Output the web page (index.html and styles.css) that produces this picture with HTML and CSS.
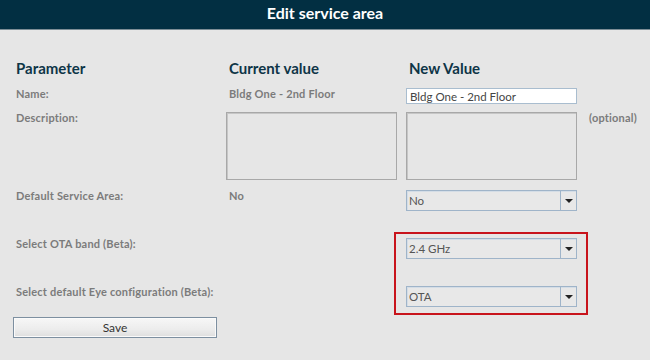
FILE: index.html
```html
<!DOCTYPE html>
<html>
  <head>
    <title>Edit service area</title>
    <meta name="viewport" content="width=device-width, initial-scale=1.0" />
    <link rel="stylesheet" href="styles.css">
  </head>
  <body>
    <div class="title-bar">Edit service area</div>

    <form class="area-form" onsubmit="return false">
      <!-- Column headers -->
      <div class="col-head">Parameter</div>
      <div class="col-head indent">Current value</div>
      <div class="col-head indent">New Value</div>
      <div></div>

      <!-- Name -->
      <label class="param" for="nameInput">Name:</label>
      <div class="current">Bldg One - 2nd Floor</div>
      <div><input type="text" id="nameInput" class="text-input" value="Bldg One - 2nd Floor" /></div>
      <div></div>

      <!-- Description -->
      <label class="param" for="descInput">Description:</label>
      <div><textarea class="text-area" readonly></textarea></div>
      <div><textarea id="descInput" class="text-area"></textarea></div>
      <div class="hint">(optional)</div>

      <!-- Default service area -->
      <label class="param" for="defaultSelect">Default Service Area:</label>
      <div class="current">No</div>
      <div class="select-wrap">
        <select id="defaultSelect">
          <option>No</option>
          <option>Yes</option>
        </select>
      </div>
      <div></div>

      <!-- OTA band -->
      <label class="param" for="bandSelect">Select OTA band (Beta):</label>
      <div></div>
      <div class="select-wrap band-cell">
        <select id="bandSelect">
          <option>2.4 GHz</option>
          <option>5 GHz</option>
        </select>
      </div>
      <div></div>

      <!-- Eye configuration -->
      <label class="param" for="eyeSelect">Select default Eye configuration (Beta):</label>
      <div></div>
      <div class="select-wrap eye-cell">
        <select id="eyeSelect">
          <option>OTA</option>
        </select>
      </div>
      <div></div>

      <!-- Highlight round the beta settings -->
      <div class="highlight"></div>

      <div class="actions">
        <button type="submit" class="save-btn">Save</button>
      </div>
    </form>
  </body>
</html>
```

FILE: styles.css
```css
/* Base styles */
body {
  font-family: Lato, "Open Sans", sans-serif;
  margin: 0;
  padding: 0;
  background-color: #e6e6e6;
  overflow: hidden;
}

.title-bar {
  height: 26px;
  line-height: 26px;
  padding-bottom: 3px;
  background-color: #022f42;
  border-bottom: 1px solid #7d8e96;
  color: #fff;
  font-size: 16px;
  font-weight: bold;
  text-align: center;
}

/* Form grid */
.area-form {
  display: grid;
  grid-template-columns: 210px 180px 171px 80px;
  grid-template-rows: 29px 24px 78px 48px 48px 31px 21px;
  padding: 29px 0 0 16px;
  margin: 0;
}

.col-head {
  font-size: 15px;
  font-weight: bold;
  color: #0e3547;
  line-height: 18px;
}

.indent {
  padding-left: 3px;
}

.param,
.current,
.hint {
  font-size: 11px;
  font-weight: bold;
  letter-spacing: 0.2px;
  color: #7b7b7b;
  line-height: 12px;
  white-space: nowrap;
}

.current {
  padding-left: 3px;
}

.hint {
  padding-left: 12px;
}

.text-input {
  box-sizing: border-box;
  display: block;
  width: 171px;
  height: 16px;
  margin: 0;
  padding: 0 3px;
  border: 1px solid #a9bdcf;
  background-color: #fff;
  font-family: Lato, "Open Sans", sans-serif;
  font-size: 11.5px;
  color: #444;
}

.text-area {
  box-sizing: border-box;
  display: block;
  width: 171px;
  height: 68px;
  margin: 0;
  border: 1px solid #a8a8a8;
  box-shadow: inset 1px 1px 0 #c6c6c6;
  background-color: #e6e6e6;
  resize: none;
}

/* Select with arrow box */
.select-wrap {
  position: relative;
  width: 171px;
  height: 21px;
}

.band-cell {
  grid-column: 3;
  grid-row: 5;
}

.eye-cell {
  grid-column: 3;
  grid-row: 6;
}

.select-wrap select {
  box-sizing: border-box;
  display: block;
  width: 100%;
  height: 21px;
  margin: 0;
  padding: 0 20px 0 2px;
  border: 1px solid #9fb4c9;
  box-shadow: inset 1px 1px 0 #d4dde6;
  background-color: #e8e8e8;
  -webkit-appearance: none;
  appearance: none;
  border-radius: 0;
  font-family: Lato, "Open Sans", sans-serif;
  font-size: 11.5px;
  color: #555;
}

/* arrow box */
.select-wrap::after {
  content: "";
  position: absolute;
  top: 1px;
  right: 1px;
  width: 15px;
  height: 19px;
  border-left: 1px solid #9fb4c9;
}

/* arrow */
.select-wrap::before {
  content: "";
  position: absolute;
  top: 9px;
  right: 4px;
  border-left: 4px solid transparent;
  border-right: 4px solid transparent;
  border-top: 4px solid #222;
}

.highlight {
  grid-column: 3;
  grid-row: 5 / span 2;
  align-self: start;
  box-sizing: border-box;
  width: 194px;
  height: 83px;
  margin: -6px 0 0 -12px;
  border: 2px solid #c8141c;
  pointer-events: none;
}

.actions {
  grid-column: 1;
  grid-row: 7;
  margin-left: -3px;
}

.save-btn {
  box-sizing: border-box;
  display: block;
  width: 204px;
  height: 21px;
  margin: 0;
  padding: 0;
  border: 1px solid #7d8fa0;
  box-shadow: inset 0 0 0 1px #fafafa;
  background: linear-gradient(#f7f7f7, #ececec 60%, #dedede);
  font-family: Lato, "Open Sans", sans-serif;
  font-size: 12px;
  color: #333;
  cursor: pointer;
}
```
